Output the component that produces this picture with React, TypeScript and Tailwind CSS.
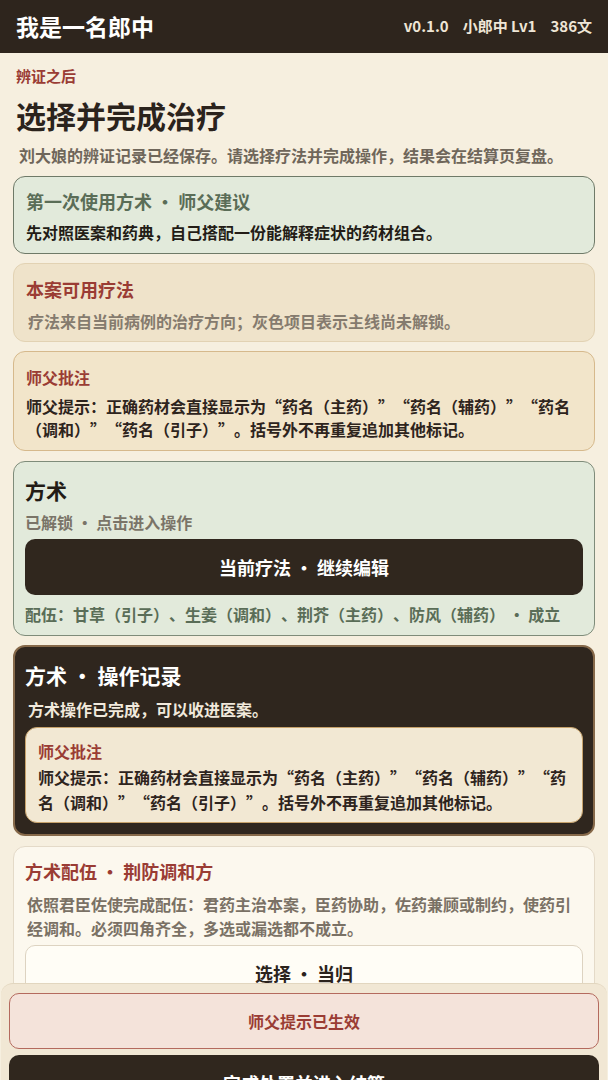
import React from 'react';

const font = { fontFamily: '"Noto Sans CJK SC", "Noto Sans", sans-serif' };

// full-width curly quotes: the font draws them narrow, so give each one a 1em box
function cjkQuotes(text: string) {
  const parts = text.split(/(“.|.”)/);
  return parts.map((p, i) => {
    if (p.length === 2 && p[0] === '“') {
      return (
        <span key={i} className="whitespace-nowrap">
          <span className="inline-block w-[1em] text-right">“</span>
          {p[1]}
        </span>
      );
    }
    if (p.length === 2 && p[1] === '”') {
      return (
        <span key={i} className="whitespace-nowrap">
          {p[0]}
          <span className="inline-block w-[1em] text-left">”</span>
        </span>
      );
    }
    return <React.Fragment key={i}>{p}</React.Fragment>;
  });
}

const noteText =
  '师父提示：正确药材会直接显示为“药名（主药）”“药名（辅药）”“药名（调和）”“药名（引子）”。括号外不再重复追加其他标记。';

function MasterNote({ inner }: { inner?: boolean }) {
  if (inner) {
    return (
      <div className="rounded-xl border border-[#c6a16a] bg-[#f2e8d3] px-3 pt-[11px] pb-[7px]">
        <div className="text-[16px] font-bold leading-6 text-[#9a3c34]">师父批注</div>
        <p className="mt-[2px] text-[16px] font-bold leading-[25px] text-[#2e241d]">{cjkQuotes(noteText)}</p>
      </div>
    );
  }
  return (
    <section className="rounded-xl border border-[#d6b98c] bg-[#f2e5ca] px-3 pt-[13px] pb-[9px]">
      <div className="text-[16px] font-bold leading-6 text-[#9a3c34]">师父批注</div>
      <p className="mt-[6px] text-[16px] font-bold leading-[23px] text-[#2e241d]">{cjkQuotes(noteText)}</p>
    </section>
  );
}

export default function App() {
  return (
    <div lang="zh-CN" className="min-h-screen bg-[#f6efdf] pb-48 [text-spacing-trim:space-all]" style={font}>
      <header className="flex h-[53px] items-center justify-between bg-[#2e251d] px-4 text-white">
        <h1 className="text-[23px] font-bold">我是一名郎中</h1>
        <div className="flex items-center gap-3.5 text-[15px] font-bold text-[#efe6d6]">
          <span>v0.1.0</span>
          <span>小郎中 Lv1</span>
          <span>386文</span>
        </div>
      </header>

      <main className="px-[13px]">
        <div className="pt-[11px] pl-[3px] text-[15px] font-bold leading-6 text-[#9a3c34]">辨证之后</div>
        <h2 className="mt-[7px] pl-[3px] text-[30px] font-bold leading-[40px] text-[#2b231c]">选择并完成治疗</h2>
        <p className="mt-[8px] pl-[6px] text-[16px] font-bold leading-6 text-[#6f665a]">
          刘大娘的辨证记录已经保存。请选择疗法并完成操作，结果会在结算页复盘。
        </p>

        <div className="mt-[9px] flex flex-col gap-[9px]">
          <section className="rounded-xl border border-[#6f7a68] bg-[#e2eadb] px-3 pt-[11px] pb-[9px]">
            <div className="text-[18px] font-bold leading-[26px] text-[#5a6d57]">第一次使用方术 · 师父建议</div>
            <p className="mt-[6px] text-[16px] font-bold leading-6 text-[#231c16]">
              先对照医案和药典，自己搭配一份能解释症状的药材组合。
            </p>
          </section>

          <section className="rounded-xl border border-[#e2d2b3] bg-[#efe3ca] px-3 pt-[12px] pb-[8px]">
            <div className="text-[18px] font-bold leading-[26px] text-[#9a3c34]">本案可用疗法</div>
            <p className="mt-[7px] pl-[2px] text-[16px] font-bold leading-6 text-[#857b6e]">
              疗法来自当前病例的治疗方向；灰色项目表示主线尚未解锁。
            </p>
          </section>

          <MasterNote />

          <section className="mt-px rounded-xl border border-[#7f8c7a] bg-[#e2eadb] px-[11px] pt-[14px] pb-[9px]">
            <div className="text-[21px] font-bold leading-7 text-[#231c16]">方术</div>
            <div className="mt-[6px] text-[16px] font-bold leading-6 text-[#7a7468]">已解锁 · 点击进入操作</div>
            <button className="mt-[5px] flex h-[56px] w-full items-center justify-center rounded-[10px] bg-[#30271e] text-[18px] font-bold text-white">
              当前疗法 · 继续编辑
            </button>
            <p className="mt-[7px] text-[16px] font-bold leading-6 text-[#5a6d57]">
              配伍：甘草（引子）、生姜（调和）、荆芥（主药）、防风（辅药） · 成立
            </p>
          </section>

          <section className="rounded-xl border-2 border-[#86694a] bg-[#2f261e] px-[10px] pt-[14px] pb-[11px]">
            <div className="text-[21px] font-bold leading-7 text-white">方术 · 操作记录</div>
            <p className="mt-[8px] pl-[3px] text-[16px] font-bold leading-6 text-[#f1e9dc]">方术操作已完成，可以收进医案。</p>
            <div className="mt-[6px]">
              <MasterNote inner />
            </div>
          </section>

          <section className="mt-px rounded-xl border border-[#e4dac8] bg-[#fcf8ee] px-[11px] pt-[11px] pb-4">
            <div className="text-[18px] font-bold leading-[26px] text-[#9a3c34]">方术配伍 · 荆防调和方</div>
            <p className="mt-[8px] pl-[2px] text-[16px] font-bold leading-6 text-[#7a7165]">
              依照君臣佐使完成配伍：君药主治本案，臣药协助，佐药兼顾或制约，使药引经调和。必须四角齐全，多选或漏选都不成立。
            </p>
            <button className="mt-[5px] flex h-[56px] w-full items-center justify-center rounded-[10px] border border-[#ddd3c1] bg-[#fffdf6] text-[18px] font-bold text-[#2b231c]">
              选择 · 当归
            </button>
            <button className="mt-2 flex h-[56px] w-full items-center justify-center rounded-[10px] border border-[#ddd3c1] bg-[#fffdf6] text-[18px] font-bold text-[#2b231c]">
              选择 · 甘草
            </button>
          </section>
        </div>
      </main>

      <div className="fixed top-[983px] right-[1px] left-[1px] rounded-t-xl border-t border-[#e2d6bf] bg-[#f1e7d4] px-2 pt-[9px] pb-2">
        <button className="flex h-[56px] w-full items-center justify-center rounded-[10px] border border-[#b46a5e] bg-[#f4e3da] text-[16px] font-bold text-[#9a3c34]">
          师父提示已生效
        </button>
        <button className="mt-[6px] flex h-[56px] w-full items-center justify-center rounded-[10px] bg-[#30271e] text-[18px] font-bold text-white">
          完成处置并进入结算
        </button>
      </div>
    </div>
  );
}
